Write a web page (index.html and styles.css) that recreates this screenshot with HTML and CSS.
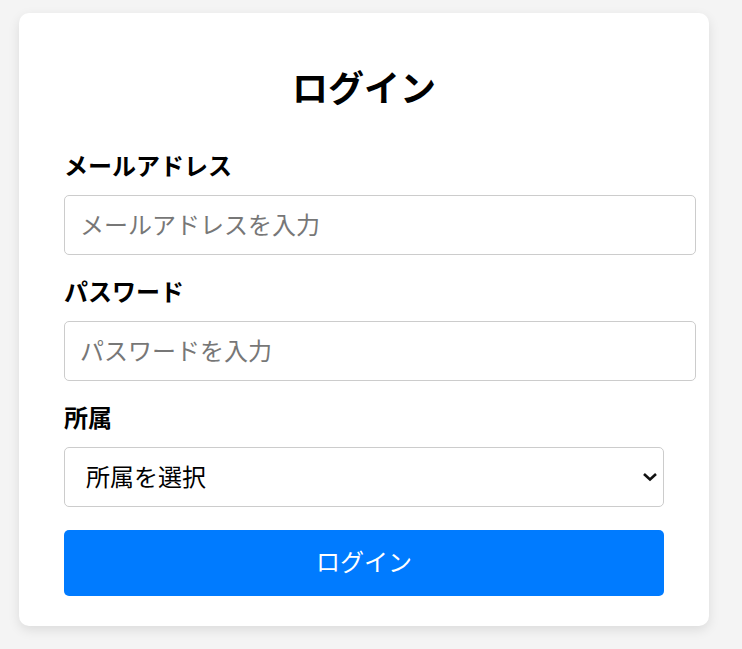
FILE: index.html
```html
<!DOCTYPE html>
<html lang="ja">
<head>
<meta charset="utf-8">
<title>ログイン</title>
<link rel="stylesheet" href="styles.css">
</head>
<body>
<div class="card">
  <h2 class="title">ログイン</h2>
  <form class="form">
    <div class="group">
      <label class="label" for="email">メールアドレス</label>
      <input class="input" id="email" type="email" placeholder="メールアドレスを入力">
    </div>
    <div class="group">
      <label class="label" for="password">パスワード</label>
      <input class="input" id="password" type="password" placeholder="パスワードを入力">
    </div>
    <div class="group group-last">
      <label class="label" for="dept">所属</label>
      <div class="select-wrap">
        <select class="select" id="dept">
          <option>所属を選択</option>
        </select>
        <svg class="chevron" width="16" height="10" viewBox="0 0 16 10" aria-hidden="true">
          <polyline points="2,2 8,7.5 14,2" fill="none" stroke="#111" stroke-width="2.6" stroke-linecap="butt" stroke-linejoin="miter"/>
        </svg>
      </div>
    </div>
    <button class="button" type="button">ログイン</button>
  </form>
</div>
</body>
</html>
```
FILE: styles.css
```css
html, body {
  margin: 0;
  padding: 0;
}

body {
  background: #f4f4f4;
  font-family: "Noto Sans CJK JP", "Noto Sans", sans-serif;
  color: #000;
  padding: 13px 0 0 19px;
  height: 649px;
  box-sizing: border-box;
}

.card {
  width: 690px;
  box-sizing: border-box;
  background: #fff;
  border-radius: 10px;
  box-shadow: 0 4px 12px rgba(0, 0, 0, 0.1);
  padding: 46px 45px 30px;
}

.title {
  margin: 0 0 34px;
  font-size: 36px;
  line-height: 54px;
  font-weight: 700;
  text-align: center;
}

.form {
  display: flex;
  flex-direction: column;
}

.group {
  display: flex;
  flex-direction: column;
  margin-bottom: 18px;
}

.group-last {
  margin-bottom: 23px;
}

.label {
  display: block;
  font-size: 24px;
  line-height: 36px;
  font-weight: 700;
  margin-bottom: 12px;
}

.input {
  width: 632px;
  height: 60px;
  box-sizing: border-box;
  padding: 0 15px 3px;
  border: 1px solid #ccc;
  border-radius: 5px;
  font-family: inherit;
  font-size: 24px;
  color: #000;
  background: #fff;
  outline: none;
}

.input::placeholder {
  color: #777;
}

.select-wrap {
  position: relative;
  width: 600px;
}

.select {
  appearance: none;
  -webkit-appearance: none;
  width: 600px;
  height: 60px;
  box-sizing: border-box;
  padding: 0 30px 3px 21px;
  border: 1px solid #ccc;
  border-radius: 5px;
  background: #fff;
  font-family: inherit;
  font-size: 24px;
  color: #000;
  outline: none;
}

.chevron {
  position: absolute;
  right: 6px;
  top: 25px;
  pointer-events: none;
}

.button {
  width: 600px;
  height: 66px;
  border: none;
  border-radius: 5px;
  background: #007bff;
  color: #fff;
  font-family: inherit;
  font-size: 24px;
  padding: 0 0 5px;
  cursor: pointer;
}
```
